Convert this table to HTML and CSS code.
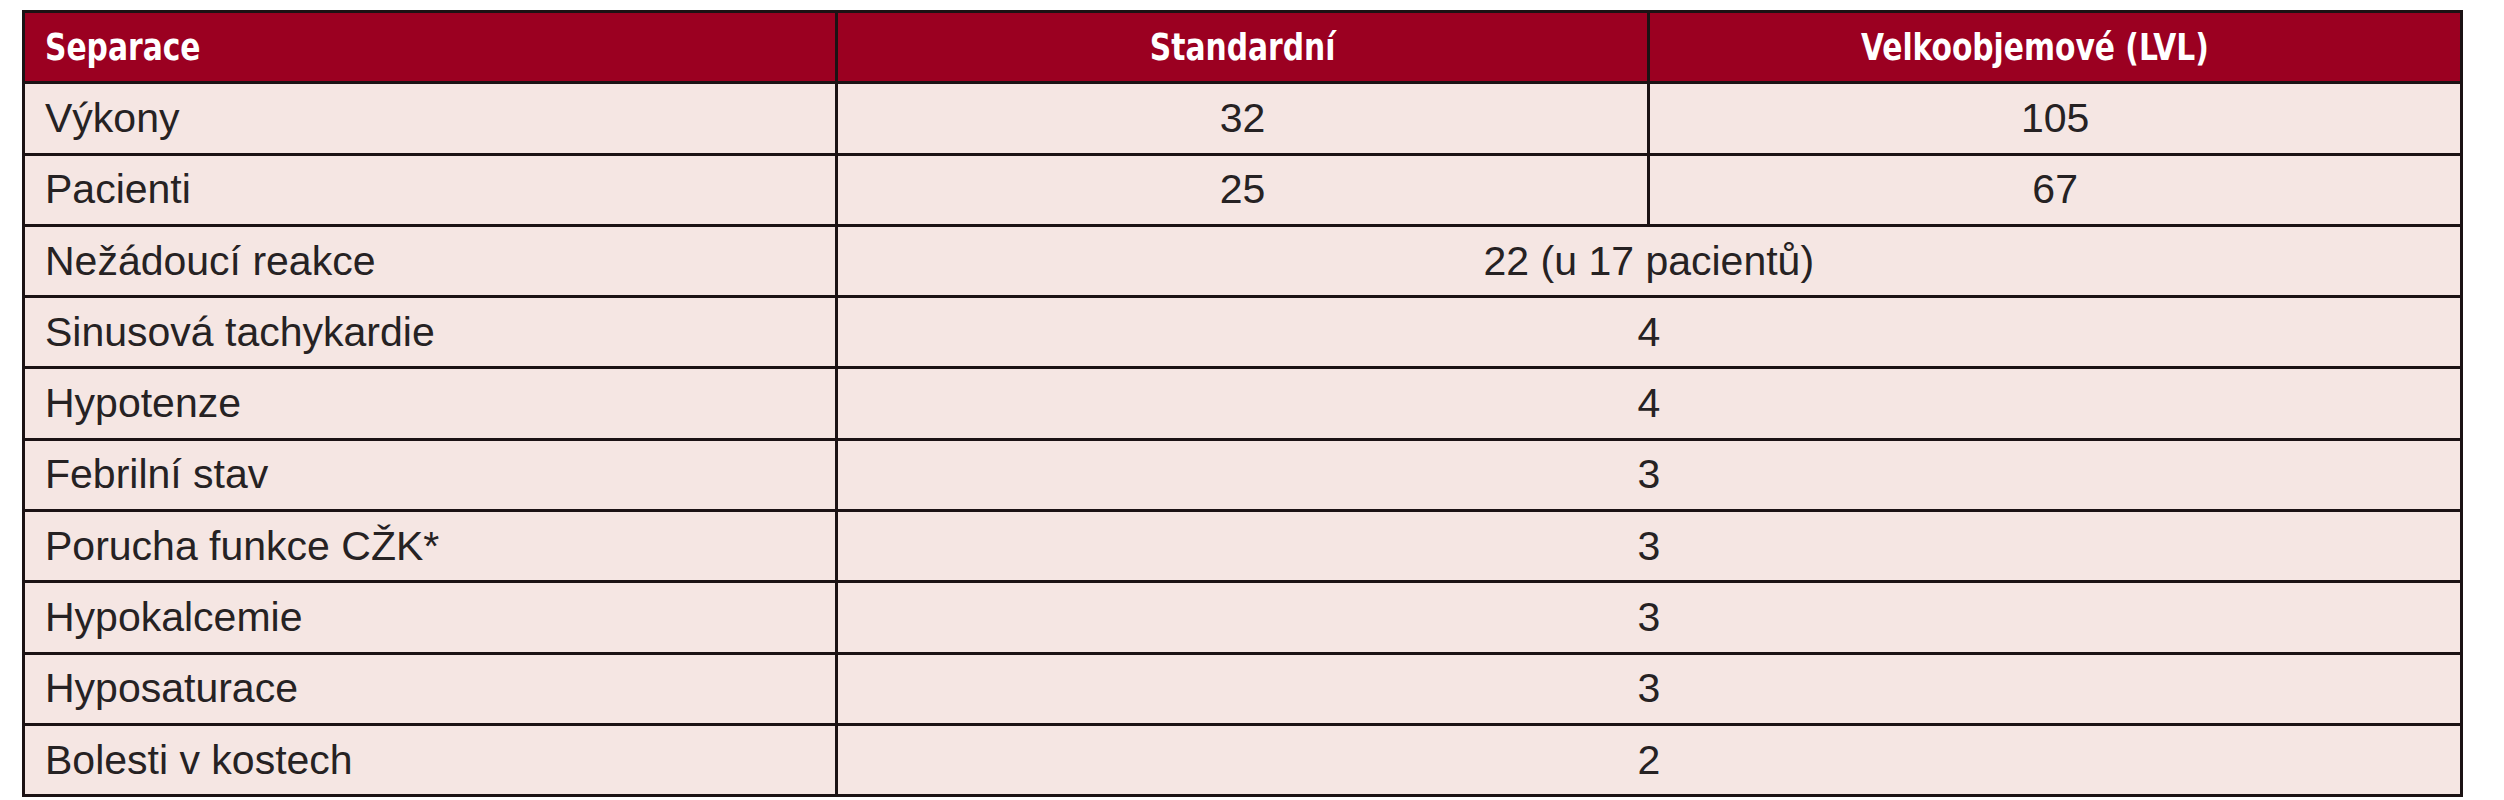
FILE: index.html
```html
<!DOCTYPE html>
<html lang="cs">
<head>
<meta charset="utf-8">
<title>Separace</title>
<link rel="stylesheet" href="styles.css">
</head>
<body>
<table class="data">
  <colgroup>
    <col class="c1"><col class="c2"><col class="c3">
  </colgroup>
  <thead>
    <tr>
      <th class="lbl"><span class="hd hd-left">Separace</span></th>
      <th><span class="hd">Standardní</span></th>
      <th class="shift"><span class="hd">Velkoobjemové (LVL)</span></th>
    </tr>
  </thead>
  <tbody>
    <tr><td class="lbl">Výkony</td><td>32</td><td>105</td></tr>
    <tr><td class="lbl">Pacienti</td><td>25</td><td>67</td></tr>
    <tr><td class="lbl">Nežádoucí reakce</td><td colspan="2">22 (u 17 pacientů)</td></tr>
    <tr><td class="lbl">Sinusová tachykardie</td><td colspan="2">4</td></tr>
    <tr><td class="lbl">Hypotenze</td><td colspan="2">4</td></tr>
    <tr><td class="lbl">Febrilní stav</td><td colspan="2">3</td></tr>
    <tr><td class="lbl">Porucha funkce CŽK*</td><td colspan="2">3</td></tr>
    <tr><td class="lbl">Hypokalcemie</td><td colspan="2">3</td></tr>
    <tr><td class="lbl">Hyposaturace</td><td colspan="2">3</td></tr>
    <tr><td class="lbl">Bolesti v kostech</td><td colspan="2">2</td></tr>
  </tbody>
</table>
</body>
</html>
```
FILE: styles.css
```css
html, body {
  margin: 0;
  padding: 0;
  background: #ffffff;
}
body {
  padding: 10px 0 0 22px;
  font-family: "Liberation Sans", Arial, sans-serif;
}
.data {
  border-collapse: collapse;
  table-layout: fixed;
  width: 2441px;
  border: 3px solid #1b1214;
}
.c1, .c2, .c3 { width: 33.333%; }
.data th, .data td {
  border: 3px solid #1b1214;
  height: 71.3px;
  padding: 0 20px;
  text-align: center;
  vertical-align: middle;
  line-height: 1;
  box-sizing: border-box;
}
.data th {
  background: #9b0021;
  color: #ffffff;
  font-family: "DejaVu Sans Condensed", "Liberation Sans", sans-serif;
  font-weight: bold;
  font-size: 38px;
}
.data th.shift {
  padding-right: 60px;
}
.hd {
  display: inline-block;
  transform: scaleX(0.87);
  transform-origin: center;
  white-space: nowrap;
}
.hd-left {
  transform-origin: left center;
}
.data td {
  background: #f5e6e3;
  color: #262223;
  font-size: 41px;
}
.data .lbl {
  text-align: left;
}
```
